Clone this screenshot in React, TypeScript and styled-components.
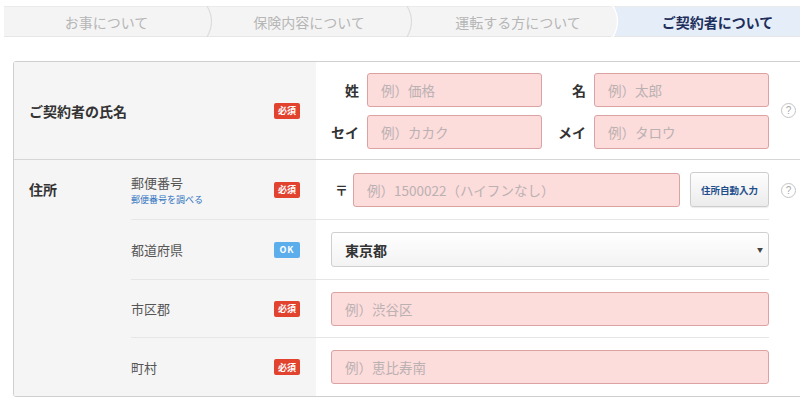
import React from 'react'
import styled, { createGlobalStyle } from 'styled-components'

const GlobalStyle = createGlobalStyle`
  html, body {
    margin: 0;
    padding: 0;
    background: #fff;
    overflow: hidden;
  }
  body {
    font-family: "Noto Sans CJK JP", "Noto Sans", sans-serif;
    color: #333;
  }
  * { box-sizing: border-box; }
`

const Page = styled.div`
  width: 800px;
  height: 398px;
  padding: 6px 0 0 4px;
`

const Steps = styled.div`
  display: flex;
  height: 31px;
  background: #f4f4f4;
  border-top: 1px solid #ebebeb;
  border-bottom: 1px solid #e6e6e6;
`

const Step = styled.div<{ width: number; active?: boolean; pad?: number }>`
  position: relative;
  width: ${({ width }) => width}px;
  flex: ${({ active }) => (active ? '1' : 'none')};
  display: flex;
  align-items: center;
  justify-content: center;
  padding-left: ${({ pad }) => pad || 0}px;
  font-size: 14px;
  color: ${({ active }) => (active ? '#1e2f5c' : '#b6b6b6')};
  font-weight: ${({ active }) => (active ? 700 : 400)};
  background: ${({ active }) => (active ? '#e5eef8' : 'transparent')};
`

const Chevron = styled.svg`
  position: absolute;
  top: -1px;
  right: -8px;
  z-index: 2;
`

const Panel = styled.div`
  margin: 24px 0 0 9px;
  width: 792px;
  border: 1px solid #cfcfcf;
  border-radius: 3px;
  overflow: hidden;
`

const Row = styled.div<{ height: number; last?: boolean }>`
  display: flex;
  min-height: ${({ height }) => height}px;
  border-bottom: ${({ last }) => (last ? 'none' : '1px solid #d6d6d6')};
`

const HeadCell = styled.div<{ width: number }>`
  width: ${({ width }) => width}px;
  flex: none;
  background: #f5f5f5;
  display: flex;
  align-items: center;
  padding: 0 16px 0 15px;
`

const TopCell = styled(HeadCell as any)`
  align-items: flex-start;
  padding-top: 19px;
`

const HeadLabel = styled.div`
  flex: 1;
  font-size: 14px;
  font-weight: 700;
  color: #333;
`

const Badge = styled.span<{ ok?: boolean }>`
  display: inline-flex;
  align-items: center;
  justify-content: center;
  width: 26px;
  height: 16px;
  border-radius: 2px;
  background: ${({ ok }) => (ok ? '#5badec' : '#e2432f')};
  color: #fff;
  font-size: 9px;
  font-weight: 700;
  letter-spacing: ${({ ok }) => (ok ? '1px' : '0')};
  flex: none;
`

const FieldArea = styled.div`
  flex: 1;
  display: flex;
  align-items: center;
  background: #fff;
  padding-left: 15px;
`

const NameGrid = styled.div`
  display: grid;
  grid-template-columns: 28px 175px 36px 175px;
  column-gap: 8px;
  row-gap: 8px;
  align-items: center;
`

const FieldLabel = styled.div`
  text-align: right;
  font-size: 14px;
  font-weight: 700;
  color: #333;
`

const TextInput = styled.div<{ width?: number }>`
  width: ${({ width }) => (width ? width + 'px' : '100%')};
  height: 34px;
  background: #fddcdc;
  border: 1px solid #dba2a2;
  border-radius: 3px;
  display: flex;
  align-items: center;
  padding-left: 13px;
  font-size: 13.5px;
  color: #bab1b1;
`

const Help = styled.span`
  width: 15px;
  height: 15px;
  border: 1px solid #c4c4c4;
  border-radius: 50%;
  display: inline-flex;
  align-items: center;
  justify-content: center;
  font-size: 10px;
  color: #a8a8a8;
  font-family: "Liberation Sans", sans-serif;
  margin-left: 12px;
  flex: none;
`

const SubList = styled.div`
  flex: 1;
  display: flex;
  flex-direction: column;
`

const SubRow = styled.div<{ height: number }>`
  display: flex;
  height: ${({ height }) => height}px;
`

const SubBody = styled.div`
  display: flex;
  width: 638px;
  flex: none;
  ${SubRow}:not(:last-child) & {
    border-bottom: 1px solid #e6e6e6;
  }
`

const SubHead = styled.div`
  width: 185px;
  flex: none;
  background: #f5f5f5;
  display: flex;
  align-items: center;
  padding-right: 16px;
`

const SubLabel = styled.div`
  flex: 1;
  font-size: 13px;
  color: #555;
`

const SubLink = styled.div`
  font-size: 9px;
  color: #2f72bf;
  margin-top: 1px;
`

const SubField = styled.div<{ pad?: number }>`
  flex: 1;
  display: flex;
  align-items: center;
  background: #fff;
  padding-left: ${({ pad }) => (pad === undefined ? 15 : pad)}px;
`

const SubAside = styled.div`
  flex: 1;
  display: flex;
  align-items: center;
  background: #fff;
`

const PostMark = styled.span`
  font-size: 13px;
  font-weight: 700;
  width: 20px;
  padding-left: 2px;
  color: #333;
`

const AutoButton = styled.div`
  margin-left: 10px;
  width: 79px;
  height: 35px;
  border: 1px solid #cdcdcd;
  border-radius: 3px;
  background: linear-gradient(#fdfdfd, #ececec);
  display: flex;
  align-items: center;
  justify-content: center;
  font-size: 9.5px;
  font-weight: 700;
  color: #1e4f8c;
  box-shadow: 0 1px 1px rgba(0, 0, 0, 0.08);
`

const Select = styled.div`
  width: 100%;
  height: 35px;
  border: 1px solid #cfcfcf;
  border-radius: 3px;
  background: linear-gradient(#ffffff, #f3f3f3);
  display: flex;
  align-items: center;
  justify-content: space-between;
  padding: 0 5px 0 13px;
  font-size: 14px;
  font-weight: 700;
  color: #333;
`

const Caret = styled.span`
  font-size: 6px;
  color: #444;
`

function Sep({ filled }: { filled?: boolean }) {
  return (
    <Chevron width="12" height="31" viewBox="0 0 12 31">
      {filled && <path d="M0 0 L2 0 Q11 15.5 2 31 L0 31 Z" fill="#f4f4f4" />}
      <path d="M2 0 Q11 15.5 2 31" fill="none" stroke={filled ? '#ffffff' : '#dcdcdc'} strokeWidth="1.2" />
    </Chevron>
  )
}

export default function App() {
  return (
    <Page>
      <GlobalStyle />
      <Steps>
        <Step width={205}>お事について<Sep /></Step>
        <Step width={200}>保険内容について<Sep /></Step>
        <Step width={206} pad={12}>運転する方について<Sep filled /></Step>
        <Step width={185} active pad={20}>ご契約者について</Step>
      </Steps>

      <Panel>
        <Row height={98}>
          <HeadCell width={302}>
            <HeadLabel>ご契約者の氏名</HeadLabel>
            <Badge>必須</Badge>
          </HeadCell>
          <FieldArea>
            <NameGrid>
              <FieldLabel>姓</FieldLabel>
              <TextInput>例）価格</TextInput>
              <FieldLabel>名</FieldLabel>
              <TextInput>例）太郎</TextInput>
              <FieldLabel>セイ</FieldLabel>
              <TextInput>例）カカク</TextInput>
              <FieldLabel>メイ</FieldLabel>
              <TextInput>例）タロウ</TextInput>
            </NameGrid>
            <Help>?</Help>
          </FieldArea>
        </Row>

        <Row height={236} last>
          <TopCell width={117}>
            <HeadLabel>住所</HeadLabel>
          </TopCell>
          <SubList>
            <SubRow height={60}>
              <SubBody>
                <SubHead>
                  <SubLabel>
                    郵便番号
                    <SubLink>郵便番号を調べる</SubLink>
                  </SubLabel>
                  <Badge>必須</Badge>
                </SubHead>
                <SubField pad={17}>
                  <PostMark>〒</PostMark>
                  <TextInput width={327}>例）1500022（ハイフンなし）</TextInput>
                  <AutoButton>住所自動入力</AutoButton>
                </SubField>
              </SubBody>
              <SubAside>
                <Help>?</Help>
              </SubAside>
            </SubRow>
            <SubRow height={60}>
              <SubBody>
                <SubHead>
                  <SubLabel>都道府県</SubLabel>
                  <Badge ok>OK</Badge>
                </SubHead>
                <SubField>
                  <Select>
                    東京都
                    <Caret>▼</Caret>
                  </Select>
                </SubField>
              </SubBody>
              <SubAside />
            </SubRow>
            <SubRow height={58}>
              <SubBody>
                <SubHead>
                  <SubLabel>市区郡</SubLabel>
                  <Badge>必須</Badge>
                </SubHead>
                <SubField>
                  <TextInput>例）渋谷区</TextInput>
                </SubField>
              </SubBody>
              <SubAside />
            </SubRow>
            <SubRow height={58}>
              <SubBody>
                <SubHead>
                  <SubLabel>町村</SubLabel>
                  <Badge>必須</Badge>
                </SubHead>
                <SubField>
                  <TextInput>例）恵比寿南</TextInput>
                </SubField>
              </SubBody>
              <SubAside />
            </SubRow>
          </SubList>
        </Row>
      </Panel>
    </Page>
  )
}
